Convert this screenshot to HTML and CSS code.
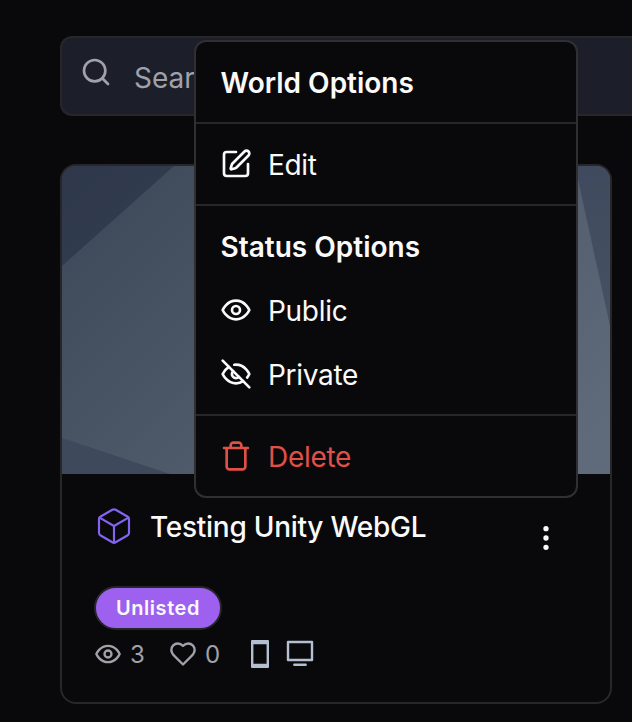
FILE: index.html
```html
<!DOCTYPE html>
<html lang="en">
<head>
<meta charset="utf-8">
<title>Worlds</title>
<link rel="stylesheet" href="styles.css">
</head>
<body>
<main class="page">
  <div class="search">
    <svg class="icon search-icon" viewBox="0 0 24 24"><circle cx="11" cy="11" r="8"/><path d="m21 21-4.3-4.3"/></svg>
    <span class="search-text">Search</span>
  </div>

  <article class="card">
    <svg class="cover" viewBox="0 0 548 308" preserveAspectRatio="none">
      <defs>
        <linearGradient id="base" gradientUnits="userSpaceOnUse" x1="80" y1="0" x2="440" y2="360">
          <stop offset="0" stop-color="#3f4b5b"/><stop offset="1" stop-color="#5f6a7b"/>
        </linearGradient>
        <linearGradient id="corner" x1="0" y1="0" x2="1" y2="1">
          <stop offset="0" stop-color="#2f384b"/><stop offset="1" stop-color="#333e50"/>
        </linearGradient>
        <linearGradient id="side" x1="0" y1="0" x2="0" y2="1">
          <stop offset="0" stop-color="#3f4a5e"/><stop offset="1" stop-color="#465163"/>
        </linearGradient>
      </defs>
      <rect width="548" height="308" fill="url(#base)"/>
      <path d="M0 0H112L0 100Z" fill="url(#corner)"/>
      <path d="M0 272L108 308H0Z" fill="#3e495c"/>
      <path d="M513 0H548V160Z" fill="url(#side)"/>
    </svg>
    <div class="card-body">
      <div class="card-head">
        <svg class="icon cube" viewBox="0 0 24 24"><path d="M21 8a2 2 0 0 0-1-1.73l-7-4a2 2 0 0 0-2 0l-7 4A2 2 0 0 0 3 8v8a2 2 0 0 0 1 1.73l7 4a2 2 0 0 0 2 0l7-4A2 2 0 0 0 21 16Z"/><path d="m3.3 7 8.7 5 8.7-5M12 22V12"/></svg>
        <h2 class="title">Testing Unity WebGL</h2>
        <svg class="icon more" viewBox="0 0 24 24"><circle cx="12" cy="5" r="1"/><circle cx="12" cy="12" r="1"/><circle cx="12" cy="19" r="1"/></svg>
      </div>
      <span class="badge">Unlisted</span>
      <div class="stats">
        <svg class="icon stat-icon" viewBox="0 0 24 24"><path d="M2 12s3-7 10-7 10 7 10 7-3 7-10 7-10-7-10-7Z"/><circle cx="12" cy="12" r="3"/></svg>
        <span class="count">3</span>
        <svg class="icon stat-icon heart" viewBox="0 0 24 24"><path d="M19 14c1.49-1.46 3-3.21 3-5.5A5.5 5.5 0 0 0 16.5 3c-1.76 0-3 .5-4.5 2-1.5-1.5-2.74-2-4.5-2A5.5 5.5 0 0 0 2 8.5c0 2.3 1.5 4.05 3 5.5l7 7Z"/></svg>
        <span class="count">0</span>
        <svg class="device phone" viewBox="0 0 28 28"><path fill-rule="evenodd" d="M6 0H22Q23 0 23 1V27Q23 28 22 28H6Q5 28 5 27V1Q5 0 6 0ZM7.4 4.2V23.8H20.6V4.2Z"/></svg>
        <svg class="device monitor" viewBox="0 0 28 28"><path fill-rule="evenodd" d="M2 .8H26Q27.2 .8 27.2 2V20Q27.2 21.2 26 21.2H2Q.8 21.2 .8 20V2Q.8 .8 2 .8ZM3.2 3.2V18.8H24.8V3.2Z"/><rect x="7.3" y="23.4" width="13.4" height="2.6" rx=".8"/></svg>
      </div>
    </div>
  </article>

  <div class="menu" role="menu">
    <div class="label">World Options</div>
    <div class="divider"></div>
    <div class="item">
      <svg class="icon" viewBox="0 0 24 24"><path d="M12 3H5a2 2 0 0 0-2 2v14a2 2 0 0 0 2 2h14a2 2 0 0 0 2-2v-7"/><path d="M18.375 2.625a1 1 0 0 1 3 3l-9.013 9.014a2 2 0 0 1-.853.505l-2.873.84a.5.5 0 0 1-.62-.62l.84-2.873a2 2 0 0 1 .506-.852z"/></svg>
      <span>Edit</span>
    </div>
    <div class="divider"></div>
    <div class="label">Status Options</div>
    <div class="item">
      <svg class="icon" viewBox="0 0 24 24"><path d="M2 12s3-7 10-7 10 7 10 7-3 7-10 7-10-7-10-7Z"/><circle cx="12" cy="12" r="3"/></svg>
      <span>Public</span>
    </div>
    <div class="item">
      <svg class="icon" viewBox="0 0 24 24"><path d="M9.88 9.88a3 3 0 1 0 4.24 4.24"/><path d="M10.73 5.08A10.43 10.43 0 0 1 12 5c7 0 10 7 10 7a13.16 13.16 0 0 1-1.67 2.68"/><path d="M6.61 6.61A13.526 13.526 0 0 0 2 12s3 7 10 7a9.74 9.74 0 0 0 5.39-1.61"/><path d="M2 2l20 20"/></svg>
      <span>Private</span>
    </div>
    <div class="divider"></div>
    <div class="item danger">
      <svg class="icon" viewBox="0 0 24 24"><path d="M3 6h18M19 6v14c0 1-1 2-2 2H7c-1 0-2-1-2-2V6M8 6V4c0-1 1-2 2-2h4c1 0 2 1 2 2v2"/></svg>
      <span>Delete</span>
    </div>
  </div>
</main>
</body>
</html>
```
FILE: styles.css
```css
* { box-sizing: border-box; }

body {
  margin: 0;
  background: #09090b;
  color: #fafafa;
  font-family: Inter, "Liberation Sans", sans-serif;
  font-size: 28px;
  line-height: 40px;
}

.page {
  position: relative;
  width: 632px;
  height: 722px;
  padding: 36px 0 0 60px;
  overflow: hidden;
}

.icon {
  flex: none;
  width: 32px;
  height: 32px;
  fill: none;
  stroke: currentColor;
  stroke-width: 2;
  stroke-linecap: round;
  stroke-linejoin: round;
}

.search {
  display: flex;
  height: 80px;
  padding: 18px;
  border: 2px solid #27272a;
  border-right: 0;
  border-radius: 12px 0 0 12px;
  background: #1c1f2a;
  color: #a1a1aa;
}

.search-text { margin: 2px 0 0 22px; }

.card {
  width: 552px;
  height: 540px;
  margin-top: 48px;
  border: 2px solid #27272a;
  border-radius: 16px;
  overflow: hidden;
}

.cover {
  display: block;
  width: 548px;
  height: 308px;
}

.card-body { padding: 32px; }

.card-head {
  display: flex;
  align-items: flex-start;
  height: 48px;
}

.cube {
  width: 40px;
  height: 40px;
  color: #8364f0;
  stroke-width: 1.3;
}

.title {
  margin: 1px 0 0 16px;
  font-size: 28px;
  font-weight: 500;
  line-height: 40px;
  letter-spacing: -0.27px;
}

.more { margin: 16px 16px 0 auto; }

.badge {
  display: block;
  width: 128px;
  height: 44px;
  margin-top: 32px;
  border: 2px solid #27272a;
  border-radius: 22px;
  background: #9e61ef;
  font-size: 20px;
  font-weight: 600;
  line-height: 40px;
  letter-spacing: 0.55px;
  text-align: center;
}

.stats {
  display: flex;
  align-items: center;
  height: 28px;
  margin-top: 10px;
  color: #a1a1aa;
  font-size: 24px;
}

.stat-icon {
  width: 28px;
  height: 28px;
}

.count {
  width: 16px;
  margin-left: 8px;
  padding-top: 2px;
}

.heart { margin-left: 23px; }

.device {
  width: 28px;
  height: 28px;
  fill: #b4c0d2;
}

.phone { margin-left: 25px; }
.monitor { margin-left: 12px; }

.menu {
  position: absolute;
  left: 194px;
  top: 40px;
  width: 384px;
  height: 458px;
  padding: 8px 0;
  border: 2px solid #303032;
  border-radius: 12px;
  background: #09090b;
}

.label,
.item {
  height: 64px;
  padding: 12px 24px;
}

.label {
  padding-top: 13px;
  padding-left: 24.5px;
  font-weight: 600;
}

.item {
  display: flex;
  align-items: center;
  gap: 16px;
  letter-spacing: -0.3px;
}

.item span { padding-top: 2px; }

.danger { color: #e05049; }

.divider {
  height: 2px;
  margin: 8px 0;
  background: #27272a;
}
```
